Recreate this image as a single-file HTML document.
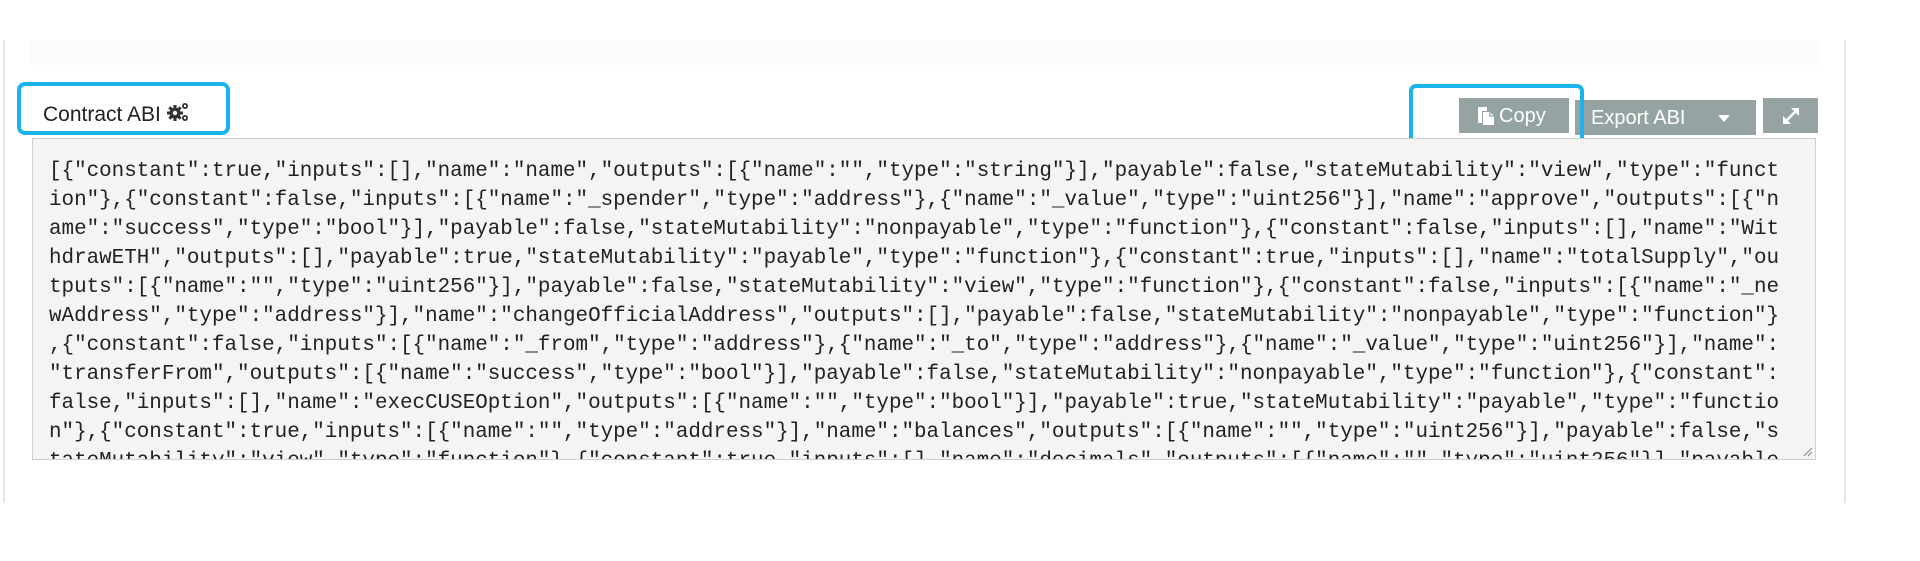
<!DOCTYPE html>
<html><head><meta charset="utf-8"><style>
html,body{margin:0;padding:0;background:#fff;width:1920px;height:561px;overflow:hidden;position:relative;font-family:"Liberation Sans",sans-serif}
.vl{position:absolute;top:40px;height:463px;width:2px;background:#dbe9f1}
.bar{position:absolute;left:30px;top:40px;width:1790px;height:25px;background:#fcfcfc}
.cbox{position:absolute;left:17px;top:82px;width:205px;height:45px;border:4px solid #1ab3ea;border-radius:8px;box-sizing:content-box}
.ctxt{position:absolute;left:43px;top:101px;font-size:21px;color:#222;white-space:nowrap}
.btn{position:absolute;background:#95a4a3;color:#fff;font-size:20px}
.ta{position:absolute;left:32px;top:138px;width:1784px;height:322px;border:1px solid #cfcfcf;background:#f4f4f4;overflow:hidden;box-sizing:border-box;padding:18px 0 0 16px}
.ta div{font-family:"Liberation Mono",monospace;font-size:20.9px;line-height:29px;white-space:pre;color:#222}
.hl{position:absolute;left:1409px;top:84px;width:167px;height:53px;border:4px solid #1ab3ea;border-radius:7px}
</style></head><body>
<div class="vl" style="left:3px"></div>
<div class="vl" style="left:1844px"></div>
<div class="bar"></div>
<div class="cbox"></div>
<div class="ctxt">Contract ABI <svg width="24" height="22" viewBox="0 0 24 22" style="vertical-align:-2px"><g fill="#333"><circle cx="8" cy="12" r="5.5"/><rect x="6.5" y="4" width="3" height="16"/><rect x="0" y="10.5" width="16" height="3"/><rect x="6.5" y="4" width="3" height="16" transform="rotate(45 8 12)"/><rect x="6.5" y="4" width="3" height="16" transform="rotate(-45 8 12)"/><circle cx="18" cy="5" r="3"/><circle cx="18" cy="17" r="3"/></g><circle cx="8" cy="12" r="2.2" fill="#fff"/><circle cx="18" cy="5" r="1.2" fill="#fff"/><circle cx="18" cy="17" r="1.2" fill="#fff"/></svg></div>
<div class="btn" style="left:1459px;top:98px;width:110px;height:35px"><svg width="18" height="20" viewBox="0 0 18 20" style="position:absolute;left:18px;top:8px"><path d="M1 1h9v4H5v12H1z" fill="#fff"/><path d="M6 6h7l4 4v9H6z" fill="#fff"/><path d="M13 6v4h4" fill="none" stroke="#95a4a3" stroke-width="1.3"/></svg><span style="position:absolute;left:40px;top:7px">Copy</span></div>
<div class="btn" style="left:1575px;top:100px;width:181px;height:35px"><span style="position:absolute;left:16px;top:7px">Export ABI</span><svg width="12" height="7" viewBox="0 0 12 7" style="position:absolute;left:143px;top:15px"><path d="M0 0h12L6 7z" fill="#fff"/></svg></div>
<div class="btn" style="left:1763px;top:98px;width:55px;height:35px"><svg width="22" height="22" viewBox="0 0 22 22" style="position:absolute;left:17px;top:7px"><path d="M5 17L17 5" stroke="#fff" stroke-width="2.5"/><path d="M11 3h8v8z M3 11v8h8z" fill="#fff"/></svg></div>
<div class="hl"></div>
<div class="ta">
<div>[{"constant":true,"inputs":[],"name":"name","outputs":[{"name":"","type":"string"}],"payable":false,"stateMutability":"view","type":"funct</div>
<div>ion"},{"constant":false,"inputs":[{"name":"_spender","type":"address"},{"name":"_value","type":"uint256"}],"name":"approve","outputs":[{"n</div>
<div>ame":"success","type":"bool"}],"payable":false,"stateMutability":"nonpayable","type":"function"},{"constant":false,"inputs":[],"name":"Wit</div>
<div>hdrawETH","outputs":[],"payable":true,"stateMutability":"payable","type":"function"},{"constant":true,"inputs":[],"name":"totalSupply","ou</div>
<div>tputs":[{"name":"","type":"uint256"}],"payable":false,"stateMutability":"view","type":"function"},{"constant":false,"inputs":[{"name":"_ne</div>
<div>wAddress","type":"address"}],"name":"changeOfficialAddress","outputs":[],"payable":false,"stateMutability":"nonpayable","type":"function"}</div>
<div>,{"constant":false,"inputs":[{"name":"_from","type":"address"},{"name":"_to","type":"address"},{"name":"_value","type":"uint256"}],"name":</div>
<div>"transferFrom","outputs":[{"name":"success","type":"bool"}],"payable":false,"stateMutability":"nonpayable","type":"function"},{"constant":</div>
<div>false,"inputs":[],"name":"execCUSEOption","outputs":[{"name":"","type":"bool"}],"payable":true,"stateMutability":"payable","type":"functio</div>
<div>n"},{"constant":true,"inputs":[{"name":"","type":"address"}],"name":"balances","outputs":[{"name":"","type":"uint256"}],"payable":false,"s</div>
<div>tateMutability":"view","type":"function"},{"constant":true,"inputs":[],"name":"decimals","outputs":[{"name":"","type":"uint256"}],"payable</div>
</div>
<svg width="10" height="10" viewBox="0 0 10 10" style="position:absolute;left:1803px;top:447px"><path d="M9 1L1 9M9 5L5 9" stroke="#888" stroke-width="1"/></svg>
</body></html>
